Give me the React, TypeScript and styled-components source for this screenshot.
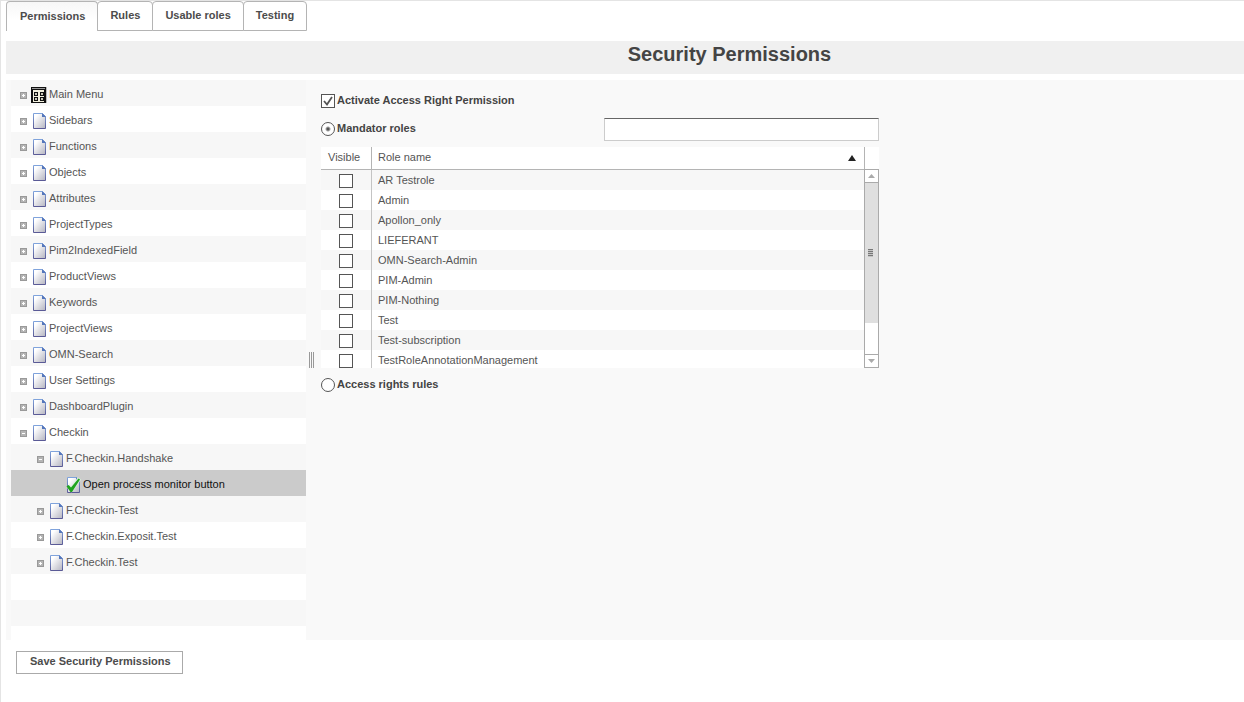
import React, { useState } from "react";
import styled, { createGlobalStyle, css } from "styled-components";

const GlobalStyle = createGlobalStyle`
  *, *::before, *::after { box-sizing: border-box; }
  body {
    margin: 0;
    background: #fff;
    color: #555;
    font: 11px/16px "Liberation Sans", Arial, sans-serif;
  }
  button, input { font: inherit; color: inherit; }
`;

const Page = styled.div`
  min-height: 100vh;
  padding-left: 5px;
  border-left: 1px solid #e4e4e4;
  border-top: 1px solid #e4e4e4;
`;

const TabBar = styled.div`
  display: flex;
  height: 30px;
  margin-bottom: 10px;
`;

const Tab = styled.button<{ $active: boolean }>`
  margin: 0 0 0 -1px;
  padding: 0 12px 2px;
  border: 1px solid #b4b4b4;
  border-bottom-width: 1px;
  border-radius: 4px 4px 0 0;
  background: #fff;
  color: #4c4c4c;
  font-weight: bold;
  &:first-child { margin-left: 0; padding-left: 13px; }
  ${(p) =>
    p.$active &&
    css`
      padding-bottom: 1px;
      border-bottom: 0;
      background: linear-gradient(#f7f7f7, #fff 60%);
    `}
`;

const TitleBar = styled.header`
  height: 33px;
  margin-bottom: 6px;
  padding-left: 209px;
  background: #f0f0f0;
  text-align: center;
`;

const Title = styled.h1`
  margin: 0;
  color: #444;
  font-size: 20px;
  line-height: 26px;
`;

const Workspace = styled.main`
  display: flex;
  height: 560px;
  padding-left: 5px;
  background: #f9f9f9;
`;

const Tree = styled.ul`
  flex: none;
  width: 295px;
  margin: 0;
  padding: 0;
  overflow: hidden;
  list-style: none;
`;

const TreeRow = styled.li<{ $level: number; $selected?: boolean }>`
  display: flex;
  align-items: center;
  height: 26px;
  padding-left: ${(p) => 9 + 17 * p.$level}px;
  background: #fff;
  &:nth-child(odd) { background: #f7f7f7; }
  &&& {
    ${(p) => p.$selected && "background: #cbcbcb; color: #111;"}
  }
`;

const NodeLabel = styled.span`
  padding-top: 2px;
`;

const Toggle = styled.button`
  display: flex;
  width: 7px;
  height: 7px;
  margin: 5px 4px 0 0;
  padding: 0;
  border: 0;
  background: none;
`;

const ToggleSpace = styled.span`
  width: 11px;
`;

const NodeIcon = styled.svg`
  flex: none;
  width: 16px;
  height: 17px;
  margin: 3px 2px 0 0;
`;

const Splitter = styled.div`
  display: flex;
  flex: none;
  align-items: center;
  justify-content: center;
  width: 10px;
  margin-right: 5px;
`;

const Grip = styled.span`
  width: 5px;
  height: 16px;
  border: solid #999;
  border-width: 0 1px;
  background: linear-gradient(#999, #999) center / 1px 100% no-repeat;
`;

const Panel = styled.section`
  flex: 0 1 558px;
  min-width: 0;
  padding-top: 9px;
`;

const OptionRow = styled.div`
  display: flex;
  align-items: center;
  justify-content: space-between;
  height: 22px;
  margin-bottom: 6px;
`;

const Option = styled.label`
  display: flex;
  align-items: center;
  gap: 2px;
  color: #444;
  font-weight: bold;
`;

const CheckBox = styled.input.attrs({ type: "checkbox" })`
  appearance: none;
  flex: none;
  display: block;
  width: 14px;
  height: 14px;
  margin: 0;
  border: 1px solid #555;
  background: #fff;
  &:checked {
    background: #fff
      url("data:image/svg+xml,%3Csvg xmlns='http://www.w3.org/2000/svg' viewBox='0 0 12 12'%3E%3Cpath d='M2 6l3 3.500L10 2' fill='none' stroke='%23555' stroke-width='1.8'/%3E%3C/svg%3E");
  }
`;

const Radio = styled.input.attrs({ type: "radio" })`
  appearance: none;
  flex: none;
  width: 14px;
  height: 14px;
  margin: 0;
  border: 1px solid #555;
  border-radius: 50%;
  background: #fff;
  &:checked { background: radial-gradient(circle, #555 0 1px, #fff 3px); }
`;

const ControlSlot = styled.span`
  display: flex;
  padding-top: 2px;
`;

const Filter = styled.input`
  width: 275px;
  height: 23px;
  margin-top: 3px;
  padding: 0 4px;
  border: 1px solid #ccc;
  border-top-color: #666;
  border-radius: 0;
  background: #fff;
`;

const Grid = styled.div`
  display: flex;
  height: 221px;
  margin: 8px 0 5px;
  overflow: hidden;
  background: #fff;
`;

const Table = styled.table`
  flex: 1;
  border-collapse: separate;
  border-spacing: 0;
  table-layout: fixed;
  width: 100%;
`;

const HeadCell = styled.th`
  height: 23px;
  padding: 0 0 2px 6px;
  border-bottom: 1px solid #b4b4b4;
  text-align: left;
  font-weight: normal;
  &:first-child { width: 51px; padding-left: 7px; border-right: 1px solid #b4b4b4; }
`;

const HeadContent = styled.span`
  display: flex;
  align-items: center;
  justify-content: space-between;
  padding-right: 8px;
`;

const SortMark = styled.svg`
  margin-top: 2px;
`;

const Row = styled.tr`
  &:nth-child(odd) { background: #f7f7f7; }
`;

const Cell = styled.td`
  height: 20px;
  padding: 0 0 0 6px;
  line-height: 20px;
  &:first-child { padding: 2px 0 0 18px; border-right: 1px solid #c4c4c4; }
`;

const ScrollColumn = styled.div`
  display: flex;
  flex-direction: column;
  flex: none;
  width: 15px;
`;

const ScrollHead = styled.div`
  height: 22px;
  border-left: 1px solid #b4b4b4;
`;

const ScrollBar = styled.div`
  display: flex;
  flex: 1;
  flex-direction: column;
  border: 1px solid #aaa;
`;

const ScrollButton = styled.button`
  display: flex;
  align-items: center;
  justify-content: center;
  height: 12px;
  padding: 0;
  border: 0;
  background: #fff;
`;

const Track = styled.div`
  flex: 1;
  border: solid #aaa;
  border-width: 1px 0;
`;

const Thumb = styled.div`
  display: flex;
  align-items: center;
  justify-content: center;
  height: 140px;
  padding-right: 2px;
  background: #dfdfdf;
`;

const Footer = styled.footer`
  padding: 11px 10px;
`;

const SaveButton = styled.button`
  height: 23px;
  padding: 0 11px 3px 13px;
  border: 1px solid #aaa;
  background: #fff;
  color: #4c4c4c;
  font-weight: bold;
`;

type NodeKind = "open" | "closed" | "leaf";
type TreeNode = { label: string; level: number; kind: NodeKind; menu?: boolean };

const top = (label: string): TreeNode => ({ label, level: 0, kind: "closed" });

const nodes: TreeNode[] = [
  { label: "Main Menu", level: 0, kind: "closed", menu: true },
  top("Sidebars"),
  top("Functions"),
  top("Objects"),
  top("Attributes"),
  top("ProjectTypes"),
  top("Pim2IndexedField"),
  top("ProductViews"),
  top("Keywords"),
  top("ProjectViews"),
  top("OMN-Search"),
  top("User Settings"),
  top("DashboardPlugin"),
  { label: "Checkin", level: 0, kind: "open" },
  { label: "F.Checkin.Handshake", level: 1, kind: "open" },
  { label: "Open process monitor button", level: 2, kind: "leaf" },
  { label: "F.Checkin-Test", level: 1, kind: "closed" },
  { label: "F.Checkin.Exposit.Test", level: 1, kind: "closed" },
  { label: "F.Checkin.Test", level: 1, kind: "closed" },
];

const roles = [
  "AR Testrole",
  "Admin",
  "Apollon_only",
  "LIEFERANT",
  "OMN-Search-Admin",
  "PIM-Admin",
  "PIM-Nothing",
  "Test",
  "Test-subscription",
  "TestRoleAnnotationManagement",
];

const tabs = ["Permissions", "Rules", "Usable roles", "Testing"];

const ToggleGlyph = ({ open }: { open: boolean }) => (
  <svg width="7" height="7" shapeRendering="crispEdges" aria-hidden="true">
    <rect width="7" height="7" fill="#999" />
    <rect x="1" y="1" width="5" height="5" fill="#b4b4b4" />
    <path d={open ? "M2 3h3v1H2z" : "M2 3h3v1H2zM3 2h1v3H3z"} fill="#fff" />
  </svg>
);

const DocumentIcon = ({ checked }: { checked?: boolean }) => (
  <NodeIcon viewBox="0 0 16 17" aria-hidden="true">
    <defs>
      <linearGradient id="paper" x1="0" y1="0" x2="1" y2="1">
        <stop offset="0.2" stopColor="#fff" />
        <stop offset="1" stopColor="#b4b4c0" />
      </linearGradient>
      <linearGradient id="edge" x1="0" y1="0" x2="0" y2="1">
        <stop offset="0" stopColor="#7fa3dc" />
        <stop offset="1" stopColor="#5a5a96" />
      </linearGradient>
    </defs>
    <path d="M2.5 1.5H11.5L14.5 4.5V16.5H2.5Z" fill="url(#paper)" stroke="url(#edge)" />
    <path d="M11 1L15 5H11Z" fill="#5577bb" />
    {checked && (
      <>
        <path d="M3 10L6.500 13.500L14.500 2.500" fill="none" stroke="#d8f0d8" strokeWidth="4" />
        <path d="M1.500 10.500L3.500 9L6 11.500L13.500 2.500L15 3.500L7 16H5.500Z" fill="#1fa31f" />
      </>
    )}
  </NodeIcon>
);

const MenuIcon = () => (
  <NodeIcon viewBox="0 0 16 17" shapeRendering="crispEdges" aria-hidden="true">
    <rect y="1" width="15" height="16" fill="#111" />
    <rect x="15" y="1" width="1" height="16" fill="#bbb" />
    <path d="M1 2h13v1H1z" fill="#999" />
    <path d="M2 4h11v12H2z" fill="#f3f1df" />
    <path d="M3 6h4v4H3zM9 6h4v4H9zM3 11h4v4H3zM9 11h4v4H9z" fill="#111" />
    <path d="M4 7h2v2H4zM10 7h2v2h-2zM4 12h2v2H4zM10 12h2v2h-2z" fill="#c9c7b8" />
  </NodeIcon>
);

export default function App() {
  const [activeTab, setActiveTab] = useState("Permissions");
  return (
    <>
      <GlobalStyle />
      <Page>
        <TabBar role="tablist">
          {tabs.map((tab) => (
            <Tab
              key={tab}
              role="tab"
              aria-selected={tab === activeTab}
              $active={tab === activeTab}
              onClick={() => setActiveTab(tab)}
            >
              {tab}
            </Tab>
          ))}
        </TabBar>
        <TitleBar>
          <Title>Security Permissions</Title>
        </TitleBar>
        <Workspace>
          <Tree>
            {nodes.map((node) => (
              <TreeRow key={node.label} $level={node.level} $selected={node.kind === "leaf"}>
                {node.kind === "leaf" ? (
                  <ToggleSpace />
                ) : (
                  <Toggle aria-label={node.label} aria-expanded={node.kind === "open"}>
                    <ToggleGlyph open={node.kind === "open"} />
                  </Toggle>
                )}
                {node.menu ? <MenuIcon /> : <DocumentIcon checked={node.kind === "leaf"} />}
                <NodeLabel>{node.label}</NodeLabel>
              </TreeRow>
            ))}
            <TreeRow $level={0} aria-hidden="true" />
            <TreeRow $level={0} aria-hidden="true" />
            <TreeRow $level={0} aria-hidden="true" />
          </Tree>
          <Splitter role="separator">
            <Grip />
          </Splitter>
          <Panel>
            <OptionRow>
              <Option>
                <ControlSlot>
                  <CheckBox defaultChecked />
                </ControlSlot>
                Activate Access Right Permission
              </Option>
            </OptionRow>
            <OptionRow>
              <Option>
                <ControlSlot>
                  <Radio name="mode" defaultChecked />
                </ControlSlot>
                Mandator roles
              </Option>
              <Filter type="text" aria-label="Filter roles" />
            </OptionRow>
            <Grid>
              <Table>
                <thead>
                  <tr>
                    <HeadCell>Visible</HeadCell>
                    <HeadCell aria-sort="ascending">
                      <HeadContent>
                        Role name
                        <SortMark width="8" height="6" aria-hidden="true">
                          <path d="M4 0L8 6H0Z" fill="#222" />
                        </SortMark>
                      </HeadContent>
                    </HeadCell>
                  </tr>
                </thead>
                <tbody>
                  {roles.map((role) => (
                    <Row key={role}>
                      <Cell>
                        <CheckBox aria-label={role} />
                      </Cell>
                      <Cell>{role}</Cell>
                    </Row>
                  ))}
                </tbody>
              </Table>
              <ScrollColumn>
                <ScrollHead />
                <ScrollBar>
                  <ScrollButton aria-label="Scroll up">
                    <svg width="7" height="4" aria-hidden="true">
                      <path d="M3.5 0L7 4H0Z" fill="#aaa" />
                    </svg>
                  </ScrollButton>
                  <Track>
                    <Thumb>
                      <svg width="5" height="8" shapeRendering="crispEdges" aria-hidden="true">
                        <rect width="5" height="8" fill="#c4c4c4" />
                        <path d="M0 0h5v1H0zM0 2h5v1H0zM0 4h5v1H0zM0 6h5v1H0z" fill="#777" />
                      </svg>
                    </Thumb>
                  </Track>
                  <ScrollButton aria-label="Scroll down">
                    <svg width="7" height="4" aria-hidden="true">
                      <path d="M3.5 4L7 0H0Z" fill="#aaa" />
                    </svg>
                  </ScrollButton>
                </ScrollBar>
              </ScrollColumn>
            </Grid>
            <OptionRow>
              <Option>
                <ControlSlot>
                  <Radio name="mode" />
                </ControlSlot>
                Access rights rules
              </Option>
            </OptionRow>
          </Panel>
        </Workspace>
        <Footer>
          <SaveButton>Save Security Permissions</SaveButton>
        </Footer>
      </Page>
    </>
  );
}
